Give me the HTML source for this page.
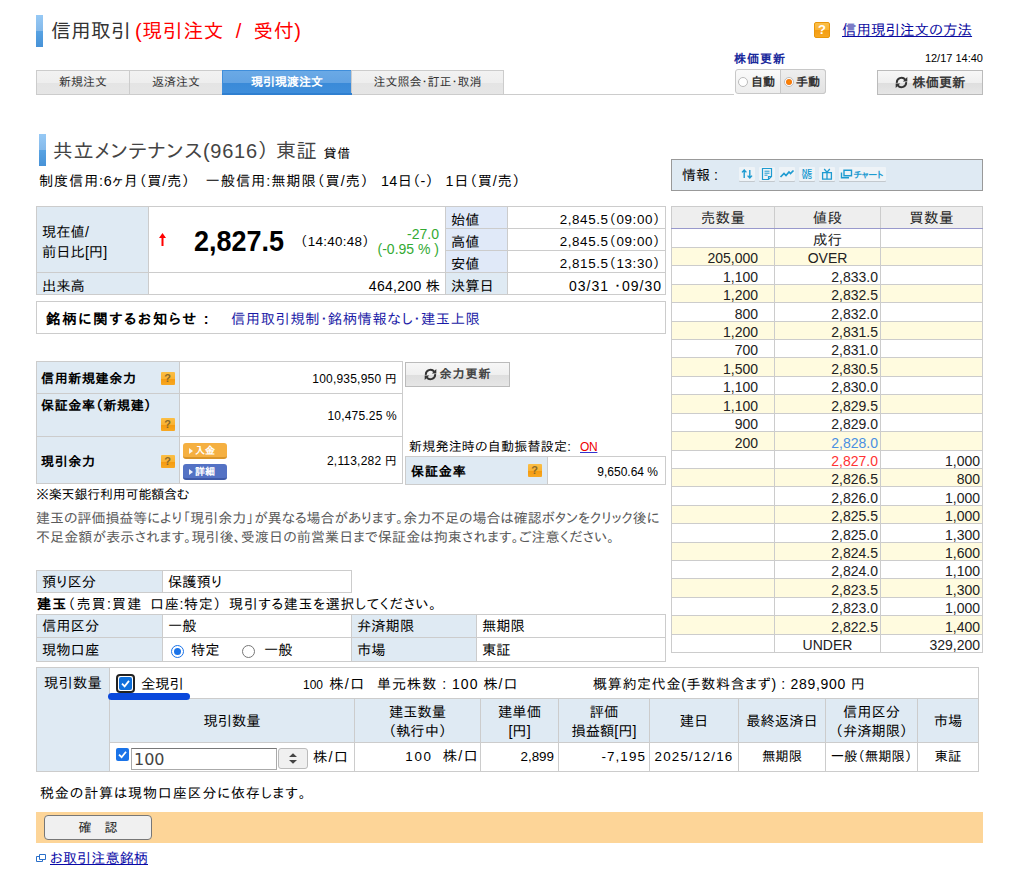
<!DOCTYPE html>
<html lang="ja">
<head>
<meta charset="utf-8">
<title>信用取引(現引注文 / 受付)</title>
<style>
*{box-sizing:border-box;}
html,body{margin:0;padding:0;background:#fff;}
body{width:1024px;height:888px;position:relative;overflow:hidden;font-family:"Liberation Sans","IPAPGothic","IPAGothic",sans-serif;font-size:13px;color:#000;line-height:1.2;}
.abs{position:absolute;}
a{color:#0a0aa8;}
table{border-collapse:collapse;table-layout:fixed;}
td,th{border:1px solid #ccc;padding:0;font-weight:normal;overflow:hidden;white-space:nowrap;}
.lb{background:#dfeaf3;}
.bar{position:absolute;width:7px;height:32px;background:linear-gradient(#96c9f5 0%,#84b9ea 50%,#58a3e3 50%,#4792d7 100%);}
/* header */
#title1{left:51px;top:17px;font-size:20px;line-height:28px;color:#333;white-space:nowrap;}
#title1 span{color:#f00;}
.tab{position:absolute;top:70px;height:24px;border:1px solid #ccc;border-bottom:none;background:linear-gradient(#f2f2f2 0%,#eee 50%,#e4e4e4 51%,#e6e6e6 100%);font-size:12px;line-height:23px;text-align:center;color:#333;}
.tab.act{background:linear-gradient(#6aa9e6 0%,#62a3e3 50%,#3a8ad8 51%,#3f8edb 100%);color:#fff;font-weight:bold;border-color:#3f8edb;}

/* right header */
.qicon{position:absolute;width:16px;height:16px;border:1px solid #e8960a;border-radius:2px;background:linear-gradient(#fbc04a 0%,#f9b233 50%,#f39c12 51%,#f7a823 100%);color:#fff;font:bold 13px/14px "Liberation Sans",sans-serif;text-align:center;}
.qs{position:absolute;width:14px;height:13px;border-radius:1px;background:linear-gradient(#fbbf45 0%,#f9b233 50%,#f59a0e 51%,#f7a823 100%);color:#8a6a2a;font:bold 11px/13px "Liberation Sans",sans-serif;text-align:center;}
.btn{position:absolute;border:1px solid #bbb;background:linear-gradient(#f7f7f7 0%,#efefef 50%,#dedede 51%,#e6e6e6 100%);color:#333;font-weight:bold;text-align:center;white-space:nowrap;}

a{text-decoration:underline;}
#title2{left:53px;top:137px;font-size:20px;line-height:28px;color:#444;white-space:nowrap;}
#sub2{left:39px;top:173px;font-size:14.3px;line-height:17px;white-space:nowrap;}
#qt td{height:22px;font-size:13.4px;padding-top:4px;line-height:16px;}
#qt .lb{padding-left:5px;font-size:14.3px;}
#qt .lb2{background:#e0e9f8;}
#qt .v{text-align:right;padding-right:4px;letter-spacing:.6px;}

#yt td{font-size:12px;}
#yt .lb{font-weight:bold;font-size:13px;padding-left:4px;position:relative;letter-spacing:.65px;}
#yt .v{text-align:right;padding-right:5px;letter-spacing:.2px;padding-top:3px;}
.sbtn{position:absolute;left:183px;width:44px;height:16px;border-radius:3px;color:#fff;font-size:10px;line-height:15px;font-weight:bold;padding-left:12px;white-space:nowrap;}
.sbtn:before{content:"";position:absolute;left:6px;top:5px;border-left:4px solid #fff;border-top:3px solid transparent;border-bottom:3px solid transparent;opacity:.9;}
.p14{position:absolute;left:36px;font-size:14px;line-height:19px;color:#5a5a5a;white-space:nowrap;}
#t3 td,#t4 td{font-size:14.3px;padding-left:5px;padding-top:2px;}

#ob td{font-size:14px;line-height:14px;padding-top:3px;color:#222;border-color:#ccc;}
#ob th{height:22px;font-size:14.5px;letter-spacing:.3px;color:#222;padding-top:2px;background:#eee;border-color:#ccc;border-bottom:1px solid #99c;}
#ob tr.y td{background:#fffbdf;}
#ob .s{text-align:right;padding-right:16px;}
#ob .p{text-align:right;padding-right:2px;}
#ob .b{text-align:right;padding-right:2px;}
#ob .c{text-align:center;}
#bt td{font-size:13.4px;}
#bt .lb{text-align:center;line-height:19px;font-size:14.3px;padding-top:2px;}

.ib{position:absolute;top:167px;width:16px;height:14px;background:#eef3f7;border-radius:1px;box-shadow:0 1px 0 #c3c9ce;}
.ib svg{position:absolute;left:0;top:0;}
</style>
<style id="fit">
#title2{letter-spacing:0.74px}
#n1{letter-spacing:-0.20px}
#n2{letter-spacing:-0.04px}
#n3{letter-spacing:0.10px}
#tax{letter-spacing:0.87px}
#lnk{letter-spacing:0.18px}
#furi{letter-spacing:0.21px}
#b2{letter-spacing:1.05px}
#b3{letter-spacing:0.70px}
#nt1{letter-spacing:1.89px}
#nt2{letter-spacing:0.56px}
#s1{letter-spacing:0.71px}
#s2{letter-spacing:0.90px}
#s3{letter-spacing:0.39px}
#s4{letter-spacing:0.71px}
#n4a{letter-spacing:1.24px}
#n4b{letter-spacing:0.73px}
#n4c{letter-spacing:0.64px}
</style>
</head>
<body>
<!-- page title -->
<div class="bar" style="left:36px;top:15px;"></div>
<div id="title1" class="abs">信用取引<span style="word-spacing:5.5px;margin-left:4px;letter-spacing:.5px;">(現引注文 / 受付)</span></div>

<!-- tabs -->
<div class="tab" style="left:36px;width:94px;">新規注文</div>
<div class="tab" style="left:129px;width:94px;">返済注文</div>
<div class="tab act" style="left:222px;width:130px;">現引現渡注文</div>
<div class="tab" style="left:351px;width:153px;">注文照会･訂正･取消</div>
<div class="abs" style="left:36px;top:94px;width:698px;height:1px;background:#ccc;"></div>
<div class="abs" style="left:222px;top:93px;width:130px;height:2px;background:#2f7fd0;"></div>


<!-- help link -->
<div class="qicon" style="left:814px;top:22px;">?</div>
<a class="abs" style="left:842px;top:22px;font-size:14.5px;line-height:17px;white-space:nowrap;color:#0a0aa0;">信用現引注文の方法</a>

<!-- price refresh -->
<div class="abs" style="left:734px;top:52px;font-size:12px;line-height:15px;font-weight:bold;color:#1a2a9c;letter-spacing:1px;white-space:nowrap;">株価更新</div>
<div class="abs" style="right:41px;top:51px;font-size:11px;line-height:14px;color:#000;white-space:nowrap;">12/17 14:40</div>
<div class="abs" style="left:735px;top:69px;width:91px;height:25px;border:1px solid #c8c8c8;border-radius:3px;background:linear-gradient(#fafafa,#ededed);"></div>
<div class="abs" style="left:780px;top:69px;width:46px;height:25px;border:1px solid #c8c8c8;border-radius:0 3px 3px 0;background:linear-gradient(#eee,#e2e2e2);"></div>
<div class="abs" style="left:738px;top:77px;width:10px;height:10px;border:1px solid #bbb;border-radius:50%;background:#fff;"></div>
<div class="abs" style="left:751px;top:75px;font-size:12px;line-height:14px;font-weight:bold;color:#333;">自動</div>
<div class="abs" style="left:784px;top:77px;width:10px;height:10px;border:1px solid #bbb;border-radius:50%;background:#fff;"></div>
<div class="abs" style="left:786px;top:79px;width:6px;height:6px;border-radius:50%;background:radial-gradient(#ff8a00,#ee6a10);"></div>
<div class="abs" style="left:796px;top:75px;font-size:12px;line-height:14px;font-weight:bold;color:#333;">手動</div>
<div class="btn" style="left:877px;top:70px;width:106px;height:25px;font-size:13px;line-height:23px;letter-spacing:.3px;padding-left:18px;color:#3a3a3a;">株価更新</div>
<svg class="abs" style="left:895px;top:76px;" width="13" height="13" viewBox="0 0 13 13"><path d="M1.9 6.9A4.6 4.6 0 0 1 10.2 3.7" fill="none" stroke="#333" stroke-width="2"/><path d="M11.1 6.1A4.6 4.6 0 0 1 2.8 9.3" fill="none" stroke="#333" stroke-width="2"/><path d="M7.8 5.4h4.5V0.9z" fill="#333"/><path d="M5.2 7.6H0.7V12.1z" fill="#333"/></svg>

<!-- stock title -->
<div class="bar" style="left:39px;top:134px;"></div>
<div id="title2" class="abs">共立メンテナンス(9616） 東証 <span style="font-size:13px;color:#000;">貸借</span></div>
<div id="sub2" class="abs"><span class="abs" id="s1" style="left:0px;top:0;">制度信用:6ヶ月（買/売）</span><span class="abs" id="s2" style="left:166.5px;top:0;">一般信用:無期限（買/売）</span><span class="abs" id="s3" style="left:342px;top:0;">14日（-）</span><span class="abs" id="s4" style="left:406.5px;top:0;">1日（買/売）</span></div>

<!-- info box -->
<div class="abs" style="left:671px;top:159px;width:312px;height:32px;border:1px solid #999;background:#dfeaf3;"></div>
<div class="abs" style="left:682px;top:166px;font-size:14px;line-height:18px;white-space:nowrap;">情報 :</div>


<div class="ib" style="left:739px;"><svg width="16" height="14" viewBox="0 0 16 14"><path d="M5.2 3V11M3 5.4L5.2 3L7.4 5.4M10.8 11V3M8.6 8.6L10.8 11L13 8.6" fill="none" stroke="#1e9bd1" stroke-width="1.4"/></svg></div>
<div class="ib" style="left:759px;"><svg width="16" height="14" viewBox="0 0 16 14"><path d="M3.5 1.5h9v8l-3 3h-6z M9.5 12.5v-3h3" fill="none" stroke="#1e9bd1" stroke-width="1.2"/><path d="M5.5 4.2h5M5.5 6.2h5M5.5 8.2h3" stroke="#1e9bd1" stroke-width="1"/></svg></div>
<div class="ib" style="left:779px;"><svg width="16" height="14" viewBox="0 0 16 14"><path d="M1.5 10L5 6.5L7 8.5L10 5L11.5 6.5L14.5 3.5" fill="none" stroke="#1e9bd1" stroke-width="1.7"/></svg></div>
<div class="ib" style="left:799px;"><svg width="16" height="14" viewBox="0 0 16 14"><text x="8" y="6.6" font-family="Liberation Sans, sans-serif" font-size="6.5" font-weight="bold" fill="#1e9bd1" text-anchor="middle" textLength="10" lengthAdjust="spacingAndGlyphs">NE</text><text x="8" y="12.4" font-family="Liberation Sans, sans-serif" font-size="6.5" font-weight="bold" fill="#1e9bd1" text-anchor="middle" textLength="10" lengthAdjust="spacingAndGlyphs">WS</text></svg></div>
<div class="ib" style="left:819px;"><svg width="16" height="14" viewBox="0 0 16 14"><path d="M3.6 5.6h8.8v6.6h-8.8z M8 5.6v6.6 M5.2 2L8 5.2L10.8 2" fill="none" stroke="#1e9bd1" stroke-width="1.3"/></svg></div>
<div class="ib" style="left:839px;width:47px;"><svg width="47" height="14" viewBox="0 0 47 14"><path d="M5 3.2h7.5v5.6H5z M2.5 5.5v5.3h7.5" fill="none" stroke="#1e9bd1" stroke-width="1.4"/><text x="14.5" y="11" font-family="Liberation Sans, IPAPGothic, IPAGothic, sans-serif" font-size="9" font-weight="bold" fill="#1e9bd1" textLength="30" lengthAdjust="spacingAndGlyphs">チャート</text></svg></div>

<!-- quote table -->
<table id="qt" class="abs" style="left:36px;top:206px;width:629px;">
<colgroup><col style="width:112px"><col style="width:297px"><col style="width:62px"><col style="width:158px"></colgroup>
<tr><td class="lb" rowspan="3" style="line-height:20px;">現在値/<br>前日比[円]</td><td rowspan="3" style="position:relative;padding:0;">
<svg class="abs" style="left:10px;top:26px;" width="7" height="13" viewBox="0 0 7 13"><path d="M3.5 0L7 5H4.5V13H2.5V5H0z" fill="#f00"/></svg>
<span class="abs" id="px" style="left:45px;top:19px;font-size:27px;line-height:32px;font-weight:bold;transform:scaleY(1.07);transform-origin:50% 80%;">2,827.5</span>
<span class="abs" id="tm" style="left:151px;top:27px;font-size:13.4px;line-height:16px;letter-spacing:.3px;">（14:40:48）</span>
<span class="abs" id="chg" style="right:6px;top:20px;font-size:14px;line-height:15px;color:#3a3;text-align:right;">-27.0<br>(-0.95 % )</span>
</td><td class="lb lb2">始値</td><td class="v">2,845.5（09:00）</td></tr>
<tr><td class="lb lb2">高値</td><td class="v">2,845.5（09:00）</td></tr>
<tr><td class="lb lb2">安値</td><td class="v">2,815.5（13:30）</td></tr>
<tr><td class="lb">出来高</td><td class="v" style="padding-right:5px;font-size:14px;letter-spacing:0.3px;">464,200 株</td><td class="lb">決算日</td><td class="v" style="padding-right:3px;font-size:14px;letter-spacing:1px;">03/31 ・09/30</td></tr>
</table>

<!-- notice -->
<div class="abs" style="left:36px;top:301px;width:630px;height:33px;border:1px solid #ccc;"></div>
<div class="abs" id="nt1" style="left:46px;top:310px;font-size:14.3px;line-height:18px;font-weight:bold;white-space:nowrap;">銘柄に関するお知らせ :</div>
<div class="abs" id="nt2" style="left:231px;top:310px;font-size:14.3px;line-height:18px;color:#1a1aa6;white-space:nowrap;">信用取引規制･銘柄情報なし･建玉上限</div>

<!-- yoryoku table -->
<table id="yt" class="abs" style="left:36px;top:361px;width:366px;">
<colgroup><col style="width:143px"><col style="width:223px"></colgroup>
<tr style="height:32px;"><td class="lb" style="padding-top:2px;">信用新規建余力<span class="qs" style="left:124px;top:10px;">?</span></td><td class="v">100,935,950 円</td></tr>
<tr style="height:43px;"><td class="lb" style="vertical-align:top;padding-top:4px;">保証金率（新規建）<span class="qs" style="left:124px;top:24px;">?</span></td><td class="v">10,475.25 %</td></tr>
<tr style="height:47px;"><td class="lb" style="padding-top:4px;">現引余力<span class="qs" style="left:124px;top:18px;">?</span></td><td class="v">2,113,282 円</td></tr>
</table>
<div class="sbtn" style="top:443px;background:#f5b041;border-bottom:2px solid #d9952a;">入金</div>
<div class="sbtn" style="top:464px;background:#5472c4;border-bottom:2px solid #3f5aa8;">詳細</div>

<div class="btn" style="left:405px;top:362px;width:105px;height:25px;font-size:12px;line-height:23px;letter-spacing:1px;padding-left:16px;color:#444;">余力更新</div>
<svg class="abs" style="left:424px;top:368px;" width="13" height="13" viewBox="0 0 13 13"><path d="M1.9 6.9A4.6 4.6 0 0 1 10.2 3.7" fill="none" stroke="#333" stroke-width="2"/><path d="M11.1 6.1A4.6 4.6 0 0 1 2.8 9.3" fill="none" stroke="#333" stroke-width="2"/><path d="M7.8 5.4h4.5V0.9z" fill="#333"/><path d="M5.2 7.6H0.7V12.1z" fill="#333"/></svg>

<div class="abs" id="furi" style="left:409px;top:439px;font-size:13px;line-height:16px;white-space:nowrap;">新規発注時の自動振替設定:</div><a class="abs" style="left:580px;top:440px;font-size:12px;line-height:15px;color:#e00;text-decoration-color:#33c;letter-spacing:-.3px;">ON</a>
<table id="ht" class="abs" style="left:405px;top:456px;width:260px;">
<colgroup><col style="width:142px"><col style="width:118px"></colgroup>
<tr style="height:28px;"><td class="lb" style="font-weight:bold;font-size:13px;padding-left:5px;padding-top:2px;position:relative;letter-spacing:.9px;">保証金率<span class="qs" style="left:122px;top:7px;">?</span></td><td style="font-size:12px;text-align:right;padding-right:7px;padding-top:3px;">9,650.64 %</td></tr>
</table>

<div class="abs" id="n1" style="left:36px;top:487px;font-size:13px;line-height:16px;white-space:nowrap;">※楽天銀行利用可能額含む</div>
<div class="p14" id="n2" style="top:509px;">建玉の評価損益等により「現引余力」が異なる場合があります。余力不足の場合は確認ボタンをクリック後に</div>
<div class="p14" id="n3" style="top:528px;">不足金額が表示されます。現引後、受渡日の前営業日まで保証金は拘束されます。ご注意ください。</div>

<table id="t3" class="abs" style="left:36px;top:570px;width:315px;">
<colgroup><col style="width:126px"><col style="width:189px"></colgroup>
<tr style="height:22px;"><td class="lb">預り区分</td><td>保護預り</td></tr>
</table>
<div class="abs" id="n4" style="left:36px;top:595px;font-size:14px;line-height:18px;white-space:nowrap;"><span class="abs" id="n4a" style="left:1px;top:0;"><b>建玉</b>（売買:買建</span><span class="abs" id="n4b" style="left:114px;top:0;">口座:特定）</span><span class="abs" id="n4c" style="left:193px;top:0;">現引する建玉を選択してください。</span></div>
<table id="t4" class="abs" style="left:36px;top:614px;width:629px;">
<colgroup><col style="width:126px"><col style="width:189px"><col style="width:125px"><col style="width:189px"></colgroup>
<tr style="height:23px;"><td class="lb">信用区分</td><td>一般</td><td class="lb">弁済期限</td><td>無期限</td></tr>
<tr style="height:24px;"><td class="lb">現物口座</td><td style="position:relative;">
<span class="abs" style="left:8px;top:7px;width:13px;height:13px;border:1px solid #1a73e8;border-radius:50%;background:#fff;"></span>
<span class="abs" style="left:11px;top:10px;width:7px;height:7px;border-radius:50%;background:#1a73e8;"></span>
<span class="abs" style="left:28px;top:4px;">特定</span>
<span class="abs" style="left:79px;top:7px;width:13px;height:13px;border:1px solid #777;border-radius:50%;background:#fff;"></span>
<span class="abs" style="left:101px;top:4px;">一般</span>
</td><td class="lb">市場</td><td>東証</td></tr>
</table>

<!-- order book -->
<table id="ob" class="abs" style="left:671px;top:206px;width:311px;">
<colgroup><col style="width:103px"><col style="width:106px"><col style="width:102px"></colgroup>
<tr><th>売数量</th><th>値段</th><th>買数量</th></tr>
<tr style="height:19px"><td></td><td class="c" style="font-size:14.5px;">成行</td><td></td></tr>
<tr class="y" style="height:18px"><td class="s">205,000</td><td class="c">OVER</td><td></td></tr>
<tr style="height:19px"><td class="s">1,100</td><td class="p">2,833.0</td><td></td></tr>
<tr class="y" style="height:18px"><td class="s">1,200</td><td class="p">2,832.5</td><td></td></tr>
<tr style="height:19px"><td class="s">800</td><td class="p">2,832.0</td><td></td></tr>
<tr class="y" style="height:18px"><td class="s">1,200</td><td class="p">2,831.5</td><td></td></tr>
<tr style="height:18px"><td class="s">700</td><td class="p">2,831.0</td><td></td></tr>
<tr class="y" style="height:19px"><td class="s">1,500</td><td class="p">2,830.5</td><td></td></tr>
<tr style="height:18px"><td class="s">1,100</td><td class="p">2,830.0</td><td></td></tr>
<tr class="y" style="height:19px"><td class="s">1,100</td><td class="p">2,829.5</td><td></td></tr>
<tr style="height:18px"><td class="s">900</td><td class="p">2,829.0</td><td></td></tr>
<tr class="y" style="height:19px"><td class="s">200</td><td class="p" style="color:#4a90e2;">2,828.0</td><td></td></tr>
<tr style="height:18px"><td></td><td class="p" style="color:#f33;">2,827.0</td><td class="b">1,000</td></tr>
<tr class="y" style="height:18px"><td></td><td class="p">2,826.5</td><td class="b">800</td></tr>
<tr style="height:19px"><td></td><td class="p">2,826.0</td><td class="b">1,000</td></tr>
<tr class="y" style="height:18px"><td></td><td class="p">2,825.5</td><td class="b">1,000</td></tr>
<tr style="height:19px"><td></td><td class="p">2,825.0</td><td class="b">1,300</td></tr>
<tr class="y" style="height:18px"><td></td><td class="p">2,824.5</td><td class="b">1,600</td></tr>
<tr style="height:18px"><td></td><td class="p">2,824.0</td><td class="b">1,100</td></tr>
<tr class="y" style="height:19px"><td></td><td class="p">2,823.5</td><td class="b">1,300</td></tr>
<tr style="height:18px"><td></td><td class="p">2,823.0</td><td class="b">1,000</td></tr>
<tr class="y" style="height:19px"><td></td><td class="p">2,822.5</td><td class="b">1,400</td></tr>
<tr style="height:18px"><td></td><td class="c">UNDER</td><td class="b">329,200</td></tr>
</table>

<!-- bottom table -->
<table id="bt" class="abs" style="left:36px;top:667px;width:942px;">
<colgroup><col style="width:73px"><col style="width:245px"><col style="width:126px"><col style="width:78px"><col style="width:91px"><col style="width:89px"><col style="width:87px"><col style="width:92px"><col style="width:61px"></colgroup>
<tr style="height:31px;"><td class="lb" rowspan="3" style="vertical-align:top;padding-top:6px;font-size:14.3px;letter-spacing:.2px;">現引数量</td>
<td colspan="8" style="position:relative;">
<span class="abs" style="left:6px;top:6px;width:19px;height:19px;border:2px solid #222;border-radius:4px;background:#fff;"></span>
<span class="abs" style="left:9px;top:9px;width:13px;height:13px;border-radius:2px;background:#0f70dc;"></span>
<svg class="abs" style="left:9px;top:9px;" width="13" height="13" viewBox="0 -0.5 13 13"><path d="M3 6.2l2.6 2.6L10 3.4" fill="none" stroke="#fff" stroke-width="1.8"/></svg>
<span class="abs" style="left:31px;top:7px;font-size:14.3px;line-height:18px;">全現引</span>
<span class="abs" id="b1" style="left:193px;top:7px;font-size:12px;line-height:18px;">100 <span style="font-size:14.3px;letter-spacing:1.2px;margin-left:3px;"> 株/口</span></span>
<span class="abs" id="b2" style="left:267px;top:7px;font-size:14px;line-height:18px;">単元株数 : 100 株/口</span>
<span class="abs" id="b3" style="left:483px;top:7px;font-size:14px;line-height:18px;">概算約定代金(手数料含まず) : 289,900 円</span>
</td></tr>
<tr style="height:44px;"><td class="lb">現引数量</td><td class="lb">建玉数量<br>（執行中）</td><td class="lb">建単価<br>[円]</td><td class="lb">評価<br>損益額[円]</td><td class="lb">建日</td><td class="lb">最終返済日</td><td class="lb">信用区分<br>（弁済期限）</td><td class="lb">市場</td></tr>
<tr style="height:29px;"><td style="position:relative;">
<span class="abs" style="left:6px;top:5px;width:13px;height:13px;border-radius:2px;background:#1a73e8;"></span>
<svg class="abs" style="left:6px;top:5px;" width="13" height="13" viewBox="0 0 13 13"><path d="M3 6.6l2.6 2.6L10 3.8" fill="none" stroke="#fff" stroke-width="1.8"/></svg>
<span class="abs" style="left:21px;top:5px;width:146px;height:22px;border:1px solid #aaa;border-top-color:#777;background:#fff;font:16px/22px 'DejaVu Sans','Liberation Sans',sans-serif;color:#444;padding-left:2px;">100</span>
<span class="abs" style="left:168px;top:5px;width:30px;height:21px;border:1px solid #bbb;border-radius:3px;background:#f0f0f0;"></span>
<svg class="abs" style="left:178px;top:9px;" width="10" height="13" viewBox="0 0 10 13"><path d="M1 5L5 1.2l4 3.8z M1 8L5 11.8l4-3.8z" fill="#444"/></svg>
<span class="abs" style="left:203px;top:6px;font-size:14.3px;line-height:17px;letter-spacing:1.2px;">株/口</span>
</td><td style="text-align:right;padding-right:1px;font-size:14.3px;letter-spacing:1.2px;"><span style="font-size:13.4px;letter-spacing:1.6px;">100</span> &nbsp;株/口</td><td style="text-align:right;padding-right:4px;">2,899</td><td style="text-align:right;padding-right:3px;font-size:13.4px;letter-spacing:1.1px;">-7,195</td><td style="text-align:center;font-size:13.4px;letter-spacing:1.2px;">2025/12/16</td><td style="text-align:center;">無期限</td><td style="text-align:center;">一般（無期限）</td><td style="text-align:center;">東証</td></tr>
</table>
<div class="abs" style="left:108px;top:693px;width:82px;height:7px;border-radius:4px;background:#0a48dc;"></div>

<div class="abs" id="tax" style="left:40px;top:784px;font-size:14px;line-height:18px;white-space:nowrap;">税金の計算は現物口座区分に依存します。</div>
<div class="abs" style="left:36px;top:812px;width:947px;height:31px;background:#fdd598;"></div>
<div class="abs" style="left:44px;top:815px;width:108px;height:25px;border:1px solid #777;border-radius:4px;background:#f0f0f0;font-size:13px;line-height:23px;text-align:center;color:#222;">確　認</div>
<svg class="abs" style="left:36px;top:853px;" width="10" height="10" viewBox="0 0 10 10"><path d="M3.5 1.5h6v5h-6z M0.5 3.5h3M0.5 3.5v5h6v-2" fill="none" stroke="#2a6fc9" stroke-width="1"/></svg>
<a class="abs" id="lnk" style="left:50px;top:849px;font-size:14px;line-height:18px;white-space:nowrap;">お取引注意銘柄</a>
</body>
</html>
